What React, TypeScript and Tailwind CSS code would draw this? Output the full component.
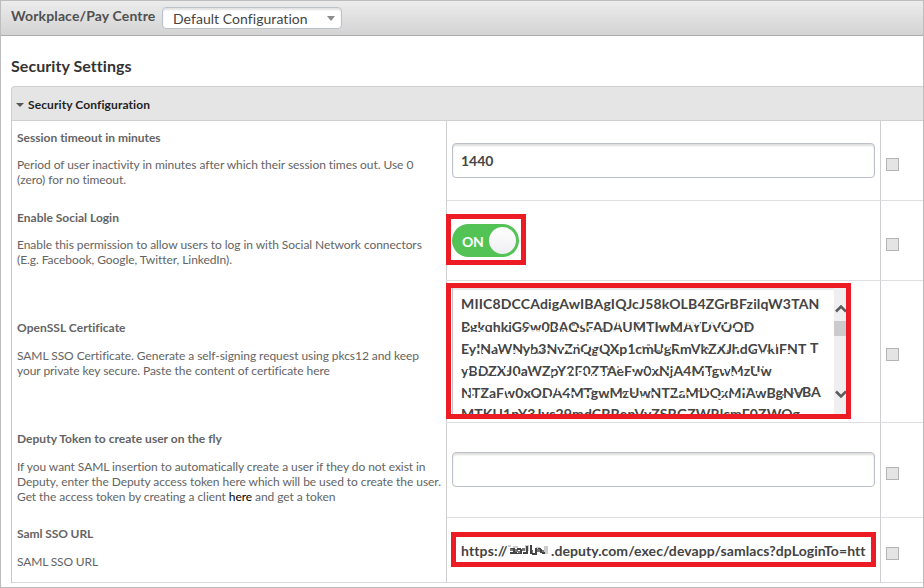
import React from "react";

const Check = () => <span className="block h-[13px] w-[13px] border border-[#b4b4b4] bg-[#e4e4e4]" />;

type RowProps = {
  height: string;
  title: string;
  titleTop: string;
  titleSpacing?: string;
  gap: string;
  description: React.ReactNode;
  checkTop: string;
  last?: boolean;
  children: React.ReactNode;
};

function Row({ height, title, titleTop, titleSpacing = "tracking-normal", gap, description, checkTop, last, children }: RowProps) {
  const line = last ? "border-b border-b-[#d9d9de]" : "border-b border-b-[#dfdfe3]";
  return (
    <div className={`flex ${height}`}>
      <div className={`w-[435px] shrink-0 border-l border-l-[#c9c9c9] pl-[5px] text-[12px] leading-[15px] text-[#646464] whitespace-nowrap ${titleTop} ${last ? "border-b border-b-[#d9d9de]" : ""}`}>
        <h3 className={`font-bold ${titleSpacing}`}>{title}</h3>
        <p className={`tracking-[-0.06px] ${gap}`}>{description}</p>
      </div>
      <div className={`w-[434px] shrink-0 border-l border-l-[#cfcfd2] ${line}`}>{children}</div>
      <div className={`flex-1 border-l border-l-[#cfcfd2] pl-[5px] ${checkTop} ${line}`}>
        <Check />
      </div>
    </div>
  );
}

const Field = ({ value }: { value: string }) => (
  <div className="ml-[5px] h-[35px] w-[423px] rounded-[4px] border border-[#bcc0cb] bg-white pl-2 text-[14px] leading-[33px] font-bold text-[#444] shadow-[inset_0_2px_2px_#dedede]">
    {value}
  </div>
);

const certLines = [
  { text: "BgkqhkiG9w0BAQsFADAUMTIwMAYDVQQD", px: 292, width: "w-[292px]", spacing: "tracking-[0.06px]", tail: "" },
  { text: "EyINaWNyb3NvZnQgQXp1cmUgRmVkZXJhdGVkIFNT", px: 345, width: "w-[349px]", spacing: "tracking-[0.04px]", tail: "T" },
  { text: "yBDZXJ0aWZpY2F0ZTAeFw0xNjA4MTgwMzUw", px: 311, width: "w-[314px]", spacing: "tracking-[0.12px]", tail: "" },
  { text: "NTZaFw0xODA4MTgwMzUwNTZaMDQxMIAwBgNV", px: 341, width: "w-[341px]", spacing: "tracking-[0.1px]", tail: "BA" },
];

// Scattered blocks that obscure a line of the certificate.
function Redaction({ seed, width }: { seed: number; width: number }) {
  const blocks: React.ReactNode[] = [];
  let s = seed * 1237 + 311;
  const next = () => {
    s = (s * 9301 + 49297) % 233280;
    return s / 233280;
  };
  for (let x = 1; x < width - 4; x += 5) {
    const y = 7 + Math.floor(next() * 5) * 2;
    const light = next() < 0.68;
    const w = 2 + Math.floor(next() * 2);
    blocks.push(
      <rect key={x} x={x} y={y} width={w} height={light ? 3 : 2} fill={light ? "#ffffff" : "#666666"} fillOpacity={light ? 0.85 : 0.6} />
    );
  }
  return (
    <svg className="absolute top-0 left-0" width={width} height="22" shapeRendering="crispEdges">
      {blocks}
      {seed === 1 && <rect width={width} height="7" fill="#fff" />}
      {seed === 1 && <rect y="17" width={width} height="5" fill="#fff" />}
    </svg>
  );
}

export default function App() {
  return (
    <div className="flex h-[588px] w-[924px] flex-col overflow-hidden border border-[#bdbdbd] bg-white font-['Lato','Liberation_Sans',sans-serif] [font-variant-ligatures:none]">
      <header className="flex h-[35px] shrink-0 border-b border-[#ababab] bg-linear-to-b from-[#ececec] to-[#d3d3d3] pl-[10px]">
        <span className="w-[151px] shrink-0 pt-[5px] text-[14px] leading-[20px] font-bold tracking-[0.14px] whitespace-nowrap text-[#505050]">Workplace/Pay Centre</span>
        <div className="mt-[6px] flex h-[22px] w-[180px] items-center justify-between rounded-[4px] border border-[#bcc2cc] bg-white pr-[6px] pl-[10px] text-[14px] text-[#444] shadow-[inset_0_2px_2px_#e2e2e2]">
          <span className="whitespace-nowrap tracking-[0.05px]">Default Configuration</span>
          <span className="border-x-[4px] border-t-[5px] border-x-transparent border-t-[#8c8c8c]" />
        </div>
      </header>
      <main className="pl-[10px]">
        <h1 className="pt-[20px] text-[16px] leading-[20px] font-bold tracking-[0.06px] text-[#333]">Security Settings</h1>
        <section className="mt-[10px]">
          <div className="flex h-[35px] items-center rounded-tl-[4px] border-t border-b border-l border-[#d0d0d0] bg-[#e5e5e5] pl-[4px] pt-[2px]">
            <span className="border-x-[4px] border-t-[4px] border-x-transparent border-t-[#555]" />
            <h2 className="ml-1 text-[12px] leading-[15px] font-bold tracking-[0.1px] text-[#222]">Security Configuration</h2>
          </div>
          <Row height="h-[80px]" title="Session timeout in minutes" titleTop="pt-[9px]" gap="mt-[12px]" checkTop="pt-[37px]"
            description={<>Period of user inactivity in minutes after which their session times out. Use 0<br />(zero) for no timeout.</>}>
            <div className="pt-[22px]"><Field value="1440" /></div>
          </Row>
          <Row height="h-[80px]" title="Enable Social Login" titleTop="pt-[9px]" gap="mt-[12px]" checkTop="pt-[37px]"
            description={<>Enable this permission to allow users to log in with Social Network connectors<br />(E.g. Facebook, Google, Twitter, LinkedIn).</>}>
            <div className="mt-[13px] -ml-px h-[51px] w-[80px] border-[5px] border-[#ed1c24] bg-white pt-[5px] pl-[1px]">
              <div className="flex h-[33px] w-[67px] items-center rounded-full bg-[#54c356] pl-[10px] text-[14px] font-bold text-white">
                <span className="w-[27px] pt-[2px] tracking-[-0.3px]">ON</span>
                <span className="h-[27px] w-[27px] rounded-full bg-linear-to-b from-white to-[#efeff2]" />
              </div>
            </div>
          </Row>
          <Row height="h-[142px]" title="OpenSSL Certificate" titleTop="pt-[39px]" titleSpacing="tracking-[0.05px]" gap="mt-[13px]" checkTop="pt-[67px]"
            description={<>SAML SSO Certificate. Generate a self-signing request using pkcs12 and keep<br />your private key secure. Paste the content of certificate here</>}>
            <div className="mt-[2px] -ml-px flex h-[136px] w-[405px] justify-between overflow-hidden border-[5px] border-[#ed1c24] bg-white pl-[1px]">
              <div className="h-full w-[382px] overflow-hidden border-l border-[#bcc0cb] pt-[5px] pl-2 text-[14px] leading-[22px] font-bold whitespace-nowrap text-[#444] shadow-[inset_0_2px_1px_#e8e8e8]">
                <div className="tracking-[0.16px]">MIIC8DCCAdigAwIBAgIQJcJ58kOLB4ZGrBFzilqW3TAN</div>
                {certLines.map((l, i) => (
                  <div key={l.text} className="flex h-[22px]">
                    <div className={`relative shrink-0 pt-px ${l.width} ${l.spacing}`}>
                      {l.text}
                      <Redaction seed={i + 1} width={l.px} />
                    </div>
                    <span>{l.tail}</span>
                  </div>
                ))}
                <div className="tracking-[0.12px]">MTKU1pY3Jvc29mdCBBenVyZSBGZWRlcmF0ZWQg</div>
              </div>
              <div className="flex w-[12px] shrink-0 flex-col overflow-hidden bg-[#efefef]">
                <svg className="mt-[14px] ml-px shrink-0" width="11" height="11" viewBox="0 0 11 11" fill="none" stroke="#5c5c5c" strokeWidth="2.6"><path d="M1 9.5 6 4.5 11 9.5" /></svg>
                <span className="mt-[8px] h-[15px] shrink-0 bg-[#cbcbcb]" />
                <svg className="mt-[53px] ml-px shrink-0" width="11" height="11" viewBox="0 0 11 11" fill="none" stroke="#5c5c5c" strokeWidth="2.6"><path d="M1 2.5 6 7.5 11 2.5" /></svg>
              </div>
            </div>
          </Row>
          <Row height="h-[95px]" title="Deputy Token to create user on the fly" titleTop="pt-[8px]" titleSpacing="tracking-[0.03px]" gap="mt-[13px]" checkTop="pt-[44px]"
            description={<>If you want SAML insertion to automatically create a user if they do not exist in<br />Deputy, enter the Deputy access token here which will be used to create the user.<br />Get the access token by creating a client <a className="text-black">here</a> and get a token</>}>
            <div className="pt-[29px]"><Field value="" /></div>
          </Row>
          <Row height="h-[65px]" title="Saml SSO URL" titleTop="pt-[8px]" titleSpacing="tracking-[-0.08px]" gap="mt-[13px]" checkTop="pt-[29px]" last description={<span className="tracking-[-0.15px]">SAML SSO URL</span>}>
            <div className="mt-[14px] ml-[4px] flex h-[35px] w-[425px] border-[5px] border-[#ed1c24] bg-white pl-[5px] text-[14px] leading-[27px] font-bold whitespace-nowrap text-[#444]">
              <span className="w-[47px] shrink-0 tracking-[0.12px]">https://</span>
              <svg className="mt-[7px] shrink-0" width="42" height="14" viewBox="0 0 42 14" shapeRendering="crispEdges">
                <path fill="#ccc" d="M0 1h3v2H0zM5 2h5v2H5zM17 1h4v6h-4zM36 2h4v8h-4zM28 3h4v3h-4z" />
                <path fill="#777" d="M2 4h4v3H2zM7 5h3v3H7zM10 7h3v2h-3zM14 4h3v3h-3zM22 6h3v4h-3zM29 5h3v3h-3zM33 6h3v2h-3z" />
                <path fill="#444" d="M3 4h4v1H3zM5 5h2v4H5zM2 8h7v2H2zM9 4h4v2H9zM12 5h2v5h-2zM9 9h5v1H9zM15 8h4v2h-4zM18 2h2v8h-2zM22 1h2v9h-2zM24 9h5v2h-5zM27 4h2v6h-2zM30 4h3v1h-3zM32 5h2v4h-2zM34 8h3v2h-3z" />
              </svg>
              <span className="ml-[1px] tracking-[0.07px]">.deputy.com/exec/devapp/samlacs?dpLoginTo=htt</span>
            </div>
          </Row>
        </section>
      </main>
    </div>
  );
}
